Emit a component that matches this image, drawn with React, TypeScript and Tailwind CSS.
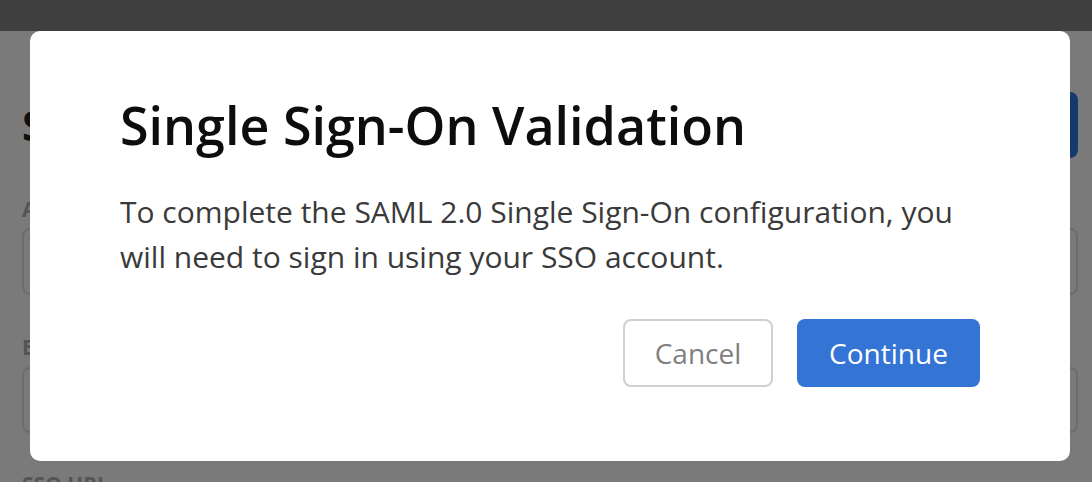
import React from "react";

export default function App() {
  const font = { fontFamily: '"Open Sans", "Liberation Sans", sans-serif' };
  return (
    <div className="relative w-[1092px] h-[482px] overflow-hidden bg-white" style={font}>
      {/* Underlying page */}
      <div className="flex flex-col">
        <div className="h-[31px] bg-[#858585]" />
        <div className="flex flex-col pl-[22px] pr-[14px]">
          <div className="mt-[61px] flex items-center justify-between">
            <h1 className="text-[42px] leading-[50px] font-bold text-[#222]">SSO Configuration</h1>
            <button className="h-[66px] w-[200px] rounded-[8px] bg-[#3079e5] text-white text-[26px] font-semibold">
              Save
            </button>
          </div>
          <label className="mt-[37px] text-[21px] leading-[28px] font-bold text-[#b0b0b0]">App Name</label>
          <div className="mt-[5px] h-[67px] rounded-[8px] border-2 border-[#e2e2e2]" />
          <label className="mt-[38px] text-[21px] leading-[28px] font-bold text-[#b0b0b0]">Entity ID</label>
          <div className="mt-[6px] h-[66px] rounded-[8px] border-2 border-[#e2e2e2]" />
          <label className="mt-[37px] text-[21px] leading-[28px] font-bold text-[#b0b0b0]">SSO URL</label>
        </div>
      </div>

      {/* Overlay */}
      <div className="absolute inset-0 bg-black/[0.52]" />

      {/* Modal */}
      <div className="absolute left-[30px] top-[31px] w-[1040px] h-[430px] rounded-[10px] bg-white flex flex-col px-[90px] pt-[63px]">
        <h2 className="text-[52px] leading-[62px] font-semibold text-[#0d0d0d]">Single Sign-On Validation</h2>
        <p className="mt-[33px] text-[30px] leading-[45px] text-[#3a3a3a]">
          To complete the SAML 2.0 Single Sign-On configuration, you
          <br />
          will need to sign in using your SSO account.
        </p>
        <div className="mt-[40px] flex justify-end gap-[24px]">
          <button className="h-[68px] w-[150px] rounded-[8px] border-2 border-[#d0d0d0] bg-white text-[28px] font-medium text-[#808080]">
            Cancel
          </button>
          <button className="h-[68px] w-[183px] rounded-[8px] bg-[#3474d4] text-[28px] font-medium text-white">
            Continue
          </button>
        </div>
      </div>
    </div>
  );
}
